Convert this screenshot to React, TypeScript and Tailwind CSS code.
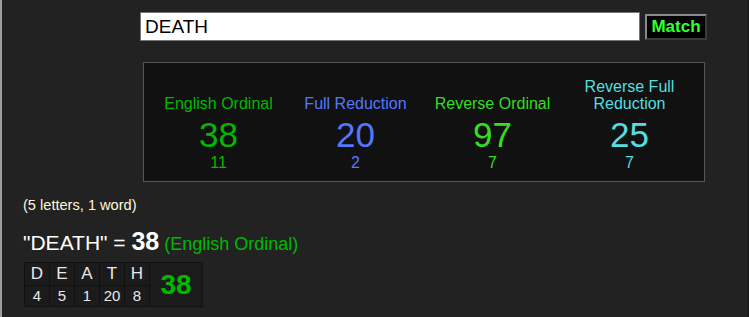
import React from "react";

const ciphers = [
  { name: ["English Ordinal"], value: 38, sub: 11, color: "text-[#00b800]" },
  { name: ["Full Reduction"], value: 20, sub: 2, color: "text-[#5577ff]" },
  { name: ["Reverse Ordinal"], value: 97, sub: 7, color: "text-[#33dd22]" },
  { name: ["Reverse Full", "Reduction"], value: 25, sub: 7, color: "text-[#55dde0]" },
];

const letters = [
  ["D", 4],
  ["E", 5],
  ["A", 1],
  ["T", 20],
  ["H", 8],
] as const;

export default function App() {
  return (
    <div
      className="h-[317px] w-[749px] overflow-hidden bg-[#222222] border-l-2 border-[#a0a0a0] border-r border-r-[#151515]"
      style={{ fontFamily: '"Liberation Sans", Arial, sans-serif' }}
    >
      {/* search row */}
      <div className="flex items-center pl-[138px] pt-[12px]">
        <div className="h-[29px] w-[500px] border border-[#767676] bg-white pl-[4px] text-[19px] leading-[27px] text-black">
          DEATH
        </div>
        <button className="ml-[5px] h-[26px] w-[62px] border-2 border-t-[#8a8a8a] border-l-[#8a8a8a] border-b-[#3a3a3a] border-r-[#3a3a3a] bg-black text-[17px] font-bold leading-[20px] text-[#33ff33]">
          Match
        </button>
      </div>

      {/* cipher panel */}
      <div className="ml-[141px] mt-[21px] flex h-[120px] w-[562px] items-end border border-[#555] bg-[#111] px-[6px] pb-[8px]">
        {ciphers.map((c) => (
          <div key={c.value + c.name[0]} className={`flex w-[137px] flex-col items-center ${c.color}`}>
            <div className="text-center text-[16px] leading-[17px]">
              {c.name.map((n) => (
                <div key={n}>{n}</div>
              ))}
            </div>
            <div className="mt-[5px] text-[35px] leading-[36px]">{c.value}</div>
            <div className="text-[16px] leading-[20px]">{c.sub}</div>
          </div>
        ))}
      </div>

      {/* summary */}
      <div className="pl-[21px] pt-[15px] text-[14.6px] leading-[17px] text-[#fff8dc]">(5 letters, 1 word)</div>
      <div className="mt-[14px] flex items-baseline pl-[21px] text-white">
        <span className="text-[21px] leading-[26px]">"DEATH" =&nbsp;</span>
        <span className="text-[25px] font-bold leading-[26px]">38</span>
        <span className="ml-[5px] text-[18px] text-[#00b800]">(English Ordinal)</span>
      </div>

      {/* letter table */}
      <div className="ml-[22px] mt-[4px] inline-grid grid-cols-[24px_24px_24px_24px_24px_52px] grid-rows-[22px_20px] gap-[1px] bg-[#111] p-[1px]">
        {letters.map(([l]) => (
          <div key={l} className="flex items-center justify-center bg-[#1b1b1b] text-[17px] text-[#e8e8e8]">
            {l}
          </div>
        ))}
        <div className="row-span-2 flex items-center justify-center bg-[#1b1b1b] text-[28px] font-bold text-[#00b800]">
          38
        </div>
        {letters.map(([l, n]) => (
          <div key={l + n} className="flex items-center justify-center bg-[#1b1b1b] text-[15px] text-[#e8e8e8]">
            {n}
          </div>
        ))}
      </div>
    </div>
  );
}
